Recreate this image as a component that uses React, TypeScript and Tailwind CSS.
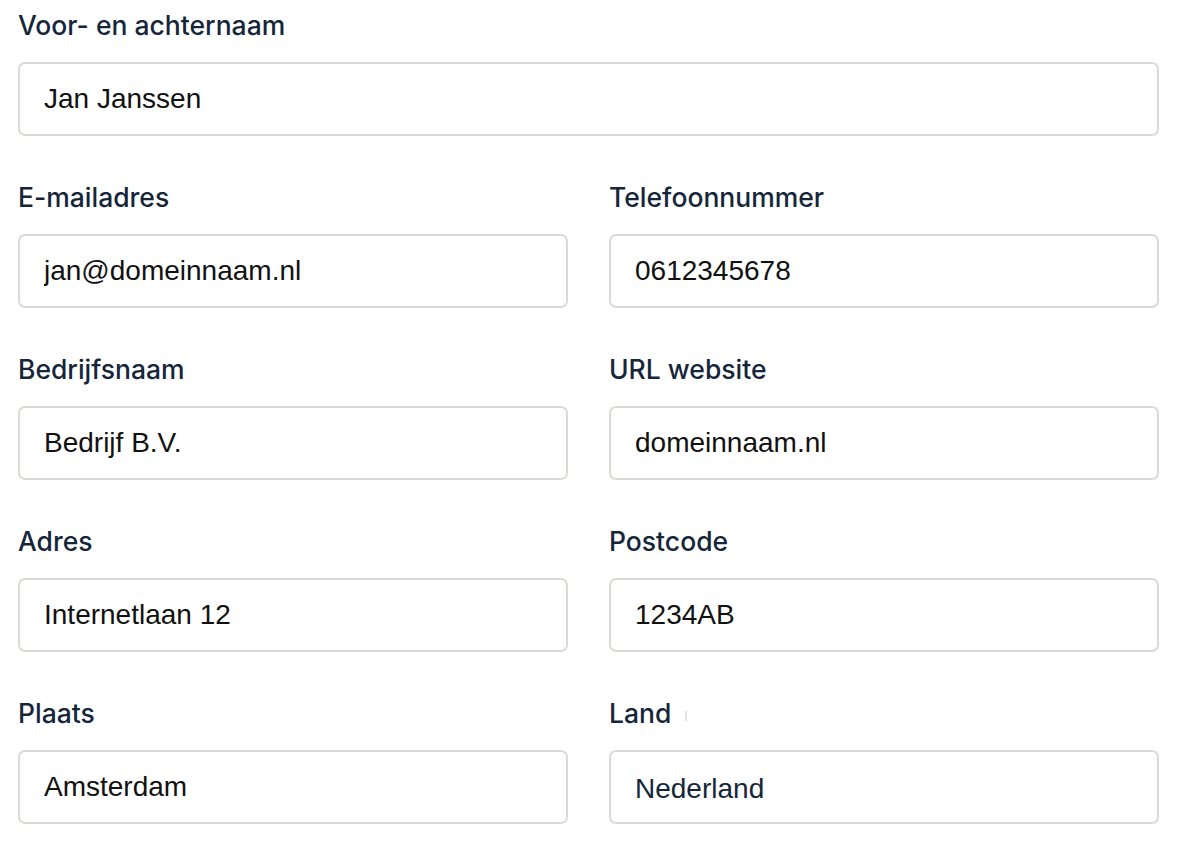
import React, { useState } from "react";

const labelCls =
  "block text-[26.5px] leading-[36px] font-medium text-[#15263b] mb-[19px] font-['Inter',sans-serif]";
const inputCls =
  "w-full h-[74px] border-2 border-[#dadad6] rounded-[7px] pl-[24px] pr-4 text-[28px] text-[#111] bg-white font-['Liberation_Sans',Arial,sans-serif] focus:outline-none";

interface FieldProps {
  label: string;
  value: string;
  onChange: (v: string) => void;
}

const Field: React.FC<FieldProps> = ({ label, value, onChange }) => (
  <div>
    <label className={labelCls}>{label}</label>
    <input
      type="text"
      value={value}
      onChange={(e) => onChange(e.target.value)}
      className={inputCls}
    />
  </div>
);

export default function App() {
  const [form, setForm] = useState({
    name: "Jan Janssen",
    email: "jan@domeinnaam.nl",
    phone: "0612345678",
    company: "Bedrijf B.V.",
    url: "domeinnaam.nl",
    address: "Internetlaan 12",
    zip: "1234AB",
    city: "Amsterdam",
    country: "Nederland",
  });

  const set = (key: keyof typeof form) => (v: string) =>
    setForm({ ...form, [key]: v });

  return (
    <div className="bg-white min-h-screen pt-[7px] pl-[18px] w-[1159px]">
      <Field label="Voor- en achternaam" value={form.name} onChange={set("name")} />

      <div className="grid grid-cols-2 gap-x-[41px] gap-y-[43px] mt-[43px]">
        <Field label="E-mailadres" value={form.email} onChange={set("email")} />
        <Field label="Telefoonnummer" value={form.phone} onChange={set("phone")} />
        <Field label="Bedrijfsnaam" value={form.company} onChange={set("company")} />
        <Field label="URL website" value={form.url} onChange={set("url")} />
        <Field label="Adres" value={form.address} onChange={set("address")} />
        <Field label="Postcode" value={form.zip} onChange={set("zip")} />
        <Field label="Plaats" value={form.city} onChange={set("city")} />

        {/* Country select */}
        <div>
          <label className={labelCls}>
            Land
            <span className="inline-block align-middle ml-[14px] w-[2px] h-[10px] rounded-full bg-[#e3e3e3]" />
          </label>
          <select
            value={form.country}
            onChange={(e) => set("country")(e.target.value)}
            className={`${inputCls} appearance-none text-[#15263b] pt-[4px]`}
          >
            <option>Nederland</option>
            <option>België</option>
            <option>Duitsland</option>
          </select>
        </div>
      </div>
    </div>
  );
}
